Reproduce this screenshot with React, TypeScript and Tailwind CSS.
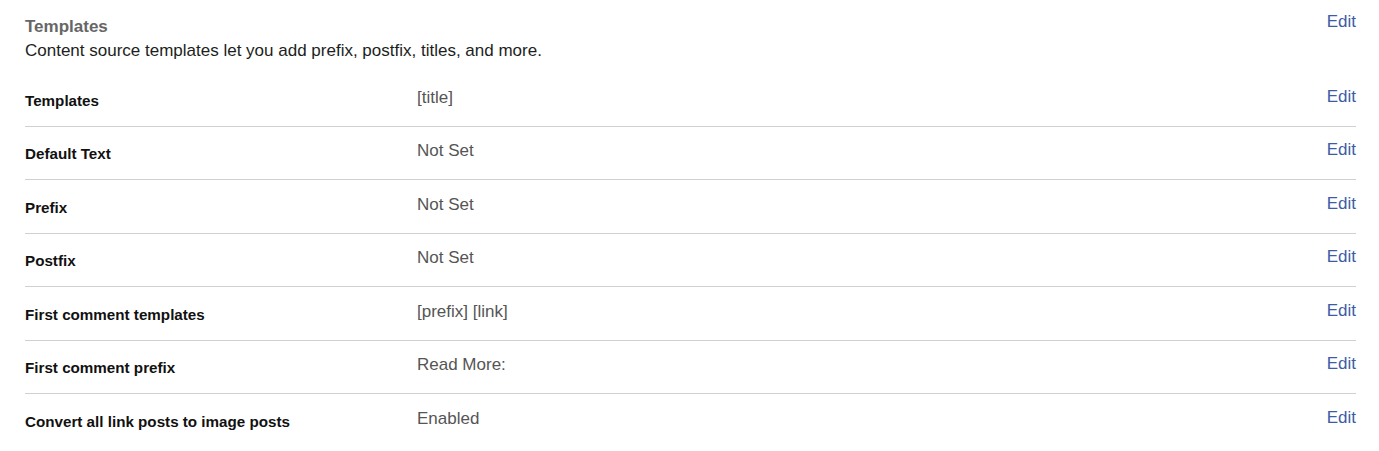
import React from 'react';

interface Fila {
    etiqueta: string;
    valor: string;
}

const filas: Fila[] = [
    { etiqueta: 'Templates', valor: '[title]' },
    { etiqueta: 'Default Text', valor: 'Not Set' },
    { etiqueta: 'Prefix', valor: 'Not Set' },
    { etiqueta: 'Postfix', valor: 'Not Set' },
    { etiqueta: 'First comment templates', valor: '[prefix] [link]' },
    { etiqueta: 'First comment prefix', valor: 'Read More:' },
    { etiqueta: 'Convert all link posts to image posts', valor: 'Enabled' },
];

export default function App() {
    return (
        <div className="bg-white w-[1379px] h-[451px] pl-[25px] pr-[23px] pt-[16px] font-['Liberation_Sans',Arial,sans-serif]">
            <div className="flex justify-between items-start">
                <div>
                    <h2 className="text-[17px] leading-[22px] font-bold text-[#666]">Templates</h2>
                    <p className="text-[17px] leading-[25px] text-[#1c1e21]">
                        Content source templates let you add prefix, postfix, titles, and more.
                    </p>
                </div>
                <a href="#" className="text-[17px] leading-[18px] text-[#3b5ca6] -mt-[3px]">Edit</a>
            </div>
            <div className="mt-[10px]">
                {filas.map((fila, i) => (
                    <div
                        key={fila.etiqueta}
                        className={`flex items-center h-[53.5px] ${i < filas.length - 1 ? 'border-b-[1.5px] border-[#d0d0d0]' : ''}`}
                    >
                        <div className="w-[392px] pt-[4px] text-[15.2px] font-bold text-[#111]">{fila.etiqueta}</div>
                        <div className="flex-1 pb-[4px] text-[17px] text-[#555]">{fila.valor}</div>
                        <a href="#" className="pb-[6px] text-[17px] text-[#3b5ca6]">Edit</a>
                    </div>
                ))}
            </div>
        </div>
    );
}
